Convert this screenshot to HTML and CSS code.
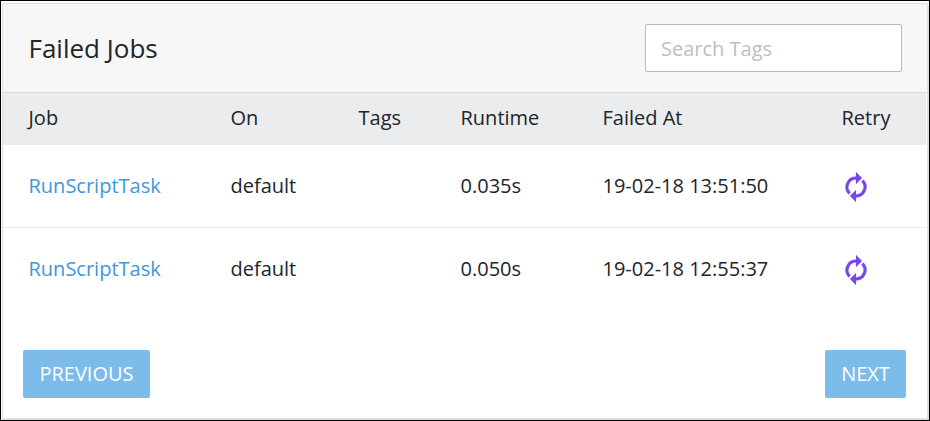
FILE: index.html
```html
<!DOCTYPE html>
<html lang="en">
<head>
<meta charset="utf-8">
<title>Failed Jobs</title>
<link rel="stylesheet" href="styles.css">
</head>
<body>
<svg class="sprite" aria-hidden="true"><symbol id="retry" viewBox="0 0 20 20"><path d="M10 3v2a5 5 0 0 0-3.54 8.54l-1.41 1.41A7 7 0 0 1 10 3zm4.95 2.05A7 7 0 0 1 10 17v-2a5 5 0 0 0 3.54-8.54l1.41-1.41zM10 20l-4-4 4-4v8zm0-12V0l4 4-4 4z"/></symbol></svg>
<main class="card">
  <header class="head"><h1>Failed Jobs</h1><input class="search" type="text" placeholder="Search Tags"></header>
  <table>
    <thead><tr><th class="job">Job</th><th class="on">On</th><th class="tags">Tags</th><th class="runtime">Runtime</th><th class="failed">Failed At</th><th>Retry</th></tr></thead>
    <tbody>
      <tr><td><a href="#">RunScriptTask</a></td><td>default</td><td></td><td>0.035s</td><td>19-02-18 13:51:50</td><td><svg class="icon"><use href="#retry"/></svg></td></tr>
      <tr><td><a href="#">RunScriptTask</a></td><td>default</td><td></td><td>0.050s</td><td>19-02-18 12:55:37</td><td><svg class="icon"><use href="#retry"/></svg></td></tr>
    </tbody>
  </table>
  <footer class="foot"><button class="prev">PREVIOUS</button><button class="next">NEXT</button></footer>
</main>
</body>
</html>
```
FILE: styles.css
```css
* { box-sizing: border-box; }
body { margin: 0; height: 421px; border: 1px solid #000; padding: 2px 0 0 1px; background: #fff; font-family: "Open Sans", sans-serif; font-size: 20px; color: #212529; overflow: hidden; }
.sprite { position: absolute; width: 0; height: 0; }
.card { height: 417px; border: 1px solid #e1dede; border-right-width: 2px; border-bottom-width: 2px; border-radius: 3px 3px 0 0; display: flex; flex-direction: column; }
.head { height: 89px; flex: none; display: flex; align-items: center; justify-content: space-between; padding: 0 25px 0 25.5px; background: #f7f7f7; border-bottom: 1px solid #d9dadb; }
h1 { margin: 0; font-size: 26px; font-weight: 400; }
.search { width: 257px; height: 48px; border: 1px solid #b1bcc3; border-radius: 2px; padding: 0 15px; font: inherit; background: #fff; }
.search::placeholder { color: #b7c1c7; opacity: 1; }
table { width: calc(100% - 1px); table-layout: fixed; border-collapse: separate; border-spacing: 0; }
th, td { padding: 0 0 0 0.5px; text-align: left; font-weight: 400; white-space: nowrap; }
th { height: 52px; padding-bottom: 3px; background: #ebecee; }
td { height: 83px; padding-bottom: 1px; border-bottom: 1px solid #e8eaeb; }
tbody tr:last-child td { border-bottom-color: transparent; }
th:first-child, td:first-child { padding-left: 25.5px; }
.job { width: 227px; }
.on { width: 128px; }
.tags { width: 102px; }
.runtime { width: 142px; }
.failed { width: 239px; }
a { color: #3f97dd; text-decoration: none; }
.icon { display: block; width: 30px; height: 30px; fill: #7746ec; stroke: #7746ec; stroke-width: 0.12; margin: 3px 0 0 -0.5px; }
.foot { display: flex; justify-content: space-between; padding: 39px 21px 0 20px; }
button { height: 48px; padding: 0 0 2px; border: 0; border-radius: 2px; background: #7dbbeb; color: #fff; font: inherit; }
.prev { width: 127px; }
.next { width: 81px; }
```
